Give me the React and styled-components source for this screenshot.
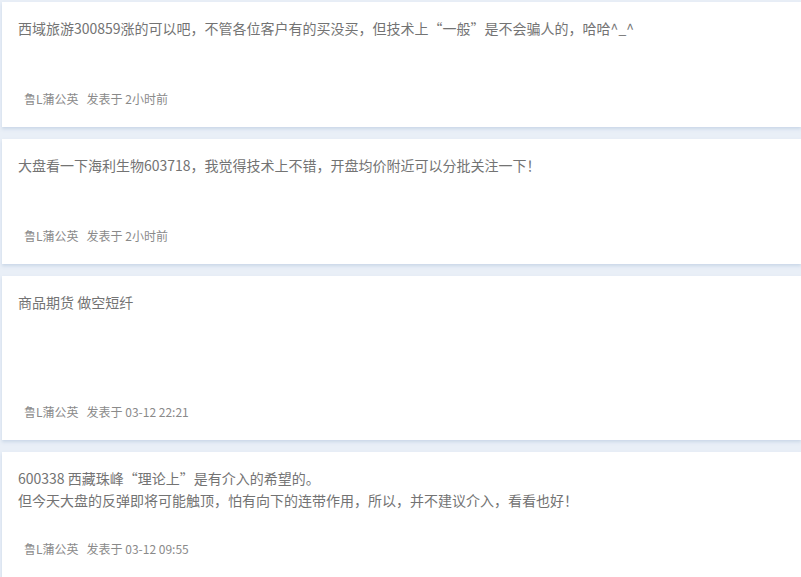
import styled, { createGlobalStyle } from "styled-components";

const GlobalStyle = createGlobalStyle`
  html, body {
    margin: 0;
    padding: 0;
    background: #e9eff7;
    font-family: "Noto Sans CJK SC", "Noto Sans", sans-serif;
  }
`;

const List = styled.div`
  display: flex;
  flex-direction: column;
  gap: 12px;
  padding: 2px 0 0 2px;
`;

const Card = styled.div`
  background: #fff;
  padding: 15px 16px 18px 16px;
  box-shadow: 0 2px 3px rgba(190, 205, 225, 0.7);
`;

const Content = styled.div`
  min-height: ${(p) => p.$min || 50}px;
  font-size: 14px;
  line-height: 22px;
  color: #737373;
  white-space: pre-line;
`;

const Meta = styled.div`
  display: flex;
  gap: 8px;
  margin-top: 22px;
  padding-left: 6px;
  font-size: 12px;
  line-height: 20px;
  color: #8a8a8a;
`;

const posts = [
  {
    text: "西域旅游300859涨的可以吧，不管各位客户有的买没买，但技术上“一般”是不会骗人的，哈哈^_^",
    time: "2小时前",
  },
  {
    text: "大盘看一下海利生物603718，我觉得技术上不错，开盘均价附近可以分批关注一下！",
    time: "2小时前",
  },
  { text: "商品期货 做空短纤", time: "03-12 22:21", min: 89 },
  {
    text: "600338 西藏珠峰“理论上”是有介入的希望的。\n但今天大盘的反弹即将可能触顶，怕有向下的连带作用，所以，并不建议介入，看看也好！",
    time: "03-12 09:55",
  },
];

export default function App() {
  return (
    <>
      <GlobalStyle />
      <List>
        {posts.map((p, i) => (
          <Card key={i}>
            <Content $min={p.min}>{p.text}</Content>
            <Meta>
              <span>鲁L蒲公英</span>
              <span>发表于 {p.time}</span>
            </Meta>
          </Card>
        ))}
      </List>
    </>
  );
}
